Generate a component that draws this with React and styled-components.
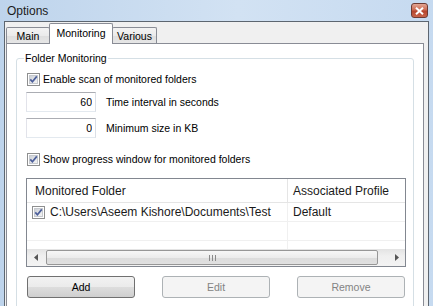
import React from "react";
import styled, { createGlobalStyle } from "styled-components";

const GlobalStyle = createGlobalStyle`
  html, body {
    margin: 0;
    padding: 0;
  }
  body {
    width: 433px;
    height: 306px;
    overflow: hidden;
    font-family: "Liberation Sans", Arial, sans-serif;
    color: #000;
  }
`;

const Window = styled.div`
  width: 433px;
  height: 306px;
  display: flex;
  flex-direction: column;
  overflow: hidden;
  background: linear-gradient(90deg, #bed4ec 0%, #d2e2f3 55%, #c6daf0 100%);
`;

const TitleBar = styled.div`
  height: 21px;
  flex: none;
  display: flex;
  align-items: center;
  justify-content: space-between;
  padding: 0 5px 0 7px;
`;

const Title = styled.span`
  font-size: 12px;
  color: #1b1b1b;
`;

const CloseButton = styled.div`
  width: 17px;
  height: 15px;
  box-sizing: border-box;
  border: 1px solid #6e3b33;
  border-radius: 3px;
  background: linear-gradient(#e3a593, #cb6b53 45%, #b6452d 55%, #c8644a);
  display: flex;
  align-items: center;
  justify-content: center;
`;

const Body = styled.div`
  flex: 1;
  min-height: 0;
  margin: 0 4px;
  border: 1px solid #5d6670;
  border-bottom: none;
  background: #f0f0f0;
  padding: 1px 4px 0 1px;
  display: flex;
  flex-direction: column;
`;

const TabStrip = styled.div`
  height: 20px;
  flex: none;
  display: flex;
  align-items: flex-end;
`;

const Tab = styled.div`
  box-sizing: border-box;
  width: ${(p) => p.$width}px;
  height: ${(p) => (p.$active ? 21 : 16)}px;
  margin-left: ${(p) => (p.$first ? 0 : -1)}px;
  margin-bottom: ${(p) => (p.$active ? -1 : 0)}px;
  border: 1px solid #898c95;
  border-bottom: none;
  border-radius: 2px 2px 0 0;
  background: ${(p) =>
    p.$active ? "#fff" : "linear-gradient(#f3f3f3, #ebebeb 50%, #dedede 51%, #e6e6e6)"};
  position: relative;
  z-index: ${(p) => (p.$active ? 1 : 0)};
  display: flex;
  align-items: center;
  justify-content: center;
  padding-bottom: ${(p) => (p.$active ? 2 : 0)}px;
  font-size: 10.5px;
`;

const Panel = styled.div`
  flex: 1;
  min-height: 0;
  background: #fff;
  border: 1px solid #898c95;
  border-bottom: none;
  padding: 0 9px;
`;

const GroupBox = styled.fieldset`
  margin: 7px 0 0;
  padding: 0;
  border: 1px solid #d5dfe5;
  border-radius: 3px;
  min-width: 0;
`;

const Legend = styled.legend`
  margin-left: 7px;
  padding: 0 1px;
  font-size: 10.5px;
  line-height: 14px;
`;

const GroupContent = styled.div`
  padding: 6px 7px 12px 9px;
  display: flex;
  flex-direction: column;
`;

const Row = styled.div`
  display: flex;
  align-items: center;
  height: ${(p) => p.$height}px;
  margin-top: ${(p) => p.$top}px;
  font-size: 10.5px;
`;

const CheckWrap = styled.span`
  display: flex;
  margin-left: 1px;
`;

const CheckLabel = styled.span`
  margin-left: 3px;
`;

const NumberInput = styled.input`
  box-sizing: border-box;
  width: 70px;
  height: 20px;
  margin: 0;
  border: 1px solid;
  border-color: #abadb3 #dbdfe6 #e3e9ef #e2e3ea;
  padding: 0 3px;
  text-align: right;
  font-family: inherit;
  font-size: 10.5px;
  color: #000;
  background: #fff;
  outline: none;
`;

const FieldLabel = styled.span`
  margin-left: 10px;
`;

const ListView = styled.div`
  margin-top: 11px;
  height: 89px;
  box-sizing: border-box;
  border: 1px solid #828790;
  display: flex;
  flex-direction: column;
  font-size: 12px;
  color: #1a1a1a;
  background: #fff;
`;

const ListRow = styled.div`
  flex: none;
  box-sizing: border-box;
  height: ${(p) => (p.$header ? 24 : 19)}px;
  display: grid;
  grid-template-columns: 261px 1fr;
  border-bottom: 1px solid ${(p) => (p.$header ? "#e5e5e5" : "#f0f0f0")};
`;

const Cell = styled.div`
  display: flex;
  align-items: center;
  white-space: nowrap;
  overflow: hidden;
  padding-left: ${(p) => p.$pad || 0}px;
  border-right: ${(p) => (p.$divider ? "1px solid" : "none")};
  border-right-color: ${(p) => (p.$header ? "#e5e5e5" : "#f0f0f0")};
`;

const RowCheck = styled.span`
  display: flex;
  margin-right: 5px;
`;

const Rows = styled.div`
  flex: 1;
  min-height: 0;
  overflow: hidden;
`;

const ScrollBar = styled.div`
  flex: none;
  height: 17px;
  display: flex;
  align-items: center;
  background: linear-gradient(#e3e3e3, #efefef 40%, #f3f3f3);
`;

const ArrowButton = styled.div`
  width: 17px;
  height: 17px;
  display: flex;
  align-items: center;
  justify-content: center;
`;

const Thumb = styled.div`
  box-sizing: border-box;
  margin-left: 2px;
  width: 332px;
  height: 15px;
  border: 1px solid #979797;
  border-radius: 2px;
  background: linear-gradient(#f7f7f7, #ececec 50%, #dcdcdc 51%, #e0e0e0);
  display: flex;
  align-items: center;
  justify-content: center;
  gap: 2px;
`;

const Grip = styled.span`
  width: 1px;
  height: 6px;
  background: #8a8a8a;
`;

const Track = styled.div`
  flex: 1;
`;

const ButtonRow = styled.div`
  margin-top: 9px;
  padding: 0 1px;
  display: flex;
  justify-content: space-between;
`;

const Button = styled.div`
  box-sizing: border-box;
  width: 108px;
  height: 22px;
  border: 1px solid ${(p) => (p.$disabled ? "#adb2b5" : "#707070")};
  border-radius: 3px;
  background: ${(p) =>
    p.$disabled ? "#f4f4f4" : "linear-gradient(#f2f2f2, #ebebeb 50%, #dddddd 51%, #cfcfcf)"};
  color: ${(p) => (p.$disabled ? "#838383" : "#000")};
  display: flex;
  align-items: center;
  justify-content: center;
  font-size: 10.5px;
`;

const CheckBox = () => (
  <svg width="13" height="13" viewBox="0 0 13 13">
    <defs>
      <linearGradient id="cbfill" x1="0" y1="0" x2="1" y2="1">
        <stop offset="0" stopColor="#cbcfd5" />
        <stop offset="1" stopColor="#f6f6f6" />
      </linearGradient>
    </defs>
    <rect x="0.5" y="0.5" width="12" height="12" fill="#fff" stroke="#8e8f8f" />
    <rect x="2.5" y="2.5" width="8" height="8" fill="url(#cbfill)" stroke="#c6c9ce" />
    <path d="M3.3 6.4 L5.4 8.8 L9.8 3.4" fill="none" stroke="#4b5e9a" strokeWidth="1.7" />
  </svg>
);

const Arrow = ({ dir }) => (
  <svg width="4" height="7" viewBox="0 0 4 7">
    <path d={dir === "left" ? "M4 0 L0 3.5 L4 7 Z" : "M0 0 L4 3.5 L0 7 Z"} fill="#555" />
  </svg>
);

const CloseGlyph = () => (
  <svg width="9" height="8" viewBox="0 0 9 8">
    <path d="M1 0.8 L8 7.2 M8 0.8 L1 7.2" stroke="#fff" strokeWidth="2" />
  </svg>
);

const folders = [{ path: "C:\\Users\\Aseem Kishore\\Documents\\Test", profile: "Default" }];

const App = () => {
  return (
    <>
      <GlobalStyle />
      <Window>
        <TitleBar>
          <Title>Options</Title>
          <CloseButton>
            <CloseGlyph />
          </CloseButton>
        </TitleBar>
        <Body>
          <TabStrip>
            <Tab $first $width={44}>Main</Tab>
            <Tab $active $width={64}>Monitoring</Tab>
            <Tab $width={45}>Various</Tab>
          </TabStrip>
          <Panel>
            <GroupBox>
              <Legend>Folder Monitoring</Legend>
              <GroupContent>
                <Row $height={16} $top={0}>
                  <CheckWrap>
                    <CheckBox />
                  </CheckWrap>
                  <CheckLabel>Enable scan of monitored folders</CheckLabel>
                </Row>
                <Row $height={20} $top={5}>
                  <NumberInput defaultValue="60" readOnly />
                  <FieldLabel>Time interval in seconds</FieldLabel>
                </Row>
                <Row $height={20} $top={6}>
                  <NumberInput defaultValue="0" readOnly />
                  <FieldLabel>Minimum size in KB</FieldLabel>
                </Row>
                <Row $height={16} $top={13}>
                  <CheckWrap>
                    <CheckBox />
                  </CheckWrap>
                  <CheckLabel>Show progress window for monitored folders</CheckLabel>
                </Row>
                <ListView>
                  <ListRow $header>
                    <Cell $header $divider $pad={8}>Monitored Folder</Cell>
                    <Cell $header $pad={5}>Associated Profile</Cell>
                  </ListRow>
                  <Rows>
                    {folders.map((f) => (
                      <ListRow key={f.path}>
                        <Cell $divider $pad={5}>
                          <RowCheck>
                            <CheckBox />
                          </RowCheck>
                          {f.path}
                        </Cell>
                        <Cell $pad={5}>{f.profile}</Cell>
                      </ListRow>
                    ))}
                    <ListRow>
                      <Cell $divider />
                      <Cell />
                    </ListRow>
                    <ListRow>
                      <Cell $divider />
                      <Cell />
                    </ListRow>
                  </Rows>
                  <ScrollBar>
                    <ArrowButton>
                      <Arrow dir="left" />
                    </ArrowButton>
                    <Thumb>
                      <Grip />
                      <Grip />
                      <Grip />
                    </Thumb>
                    <Track />
                    <ArrowButton>
                      <Arrow dir="right" />
                    </ArrowButton>
                  </ScrollBar>
                </ListView>
                <ButtonRow>
                  <Button>Add</Button>
                  <Button $disabled>Edit</Button>
                  <Button $disabled>Remove</Button>
                </ButtonRow>
              </GroupContent>
            </GroupBox>
          </Panel>
        </Body>
      </Window>
    </>
  );
};

export default App;
